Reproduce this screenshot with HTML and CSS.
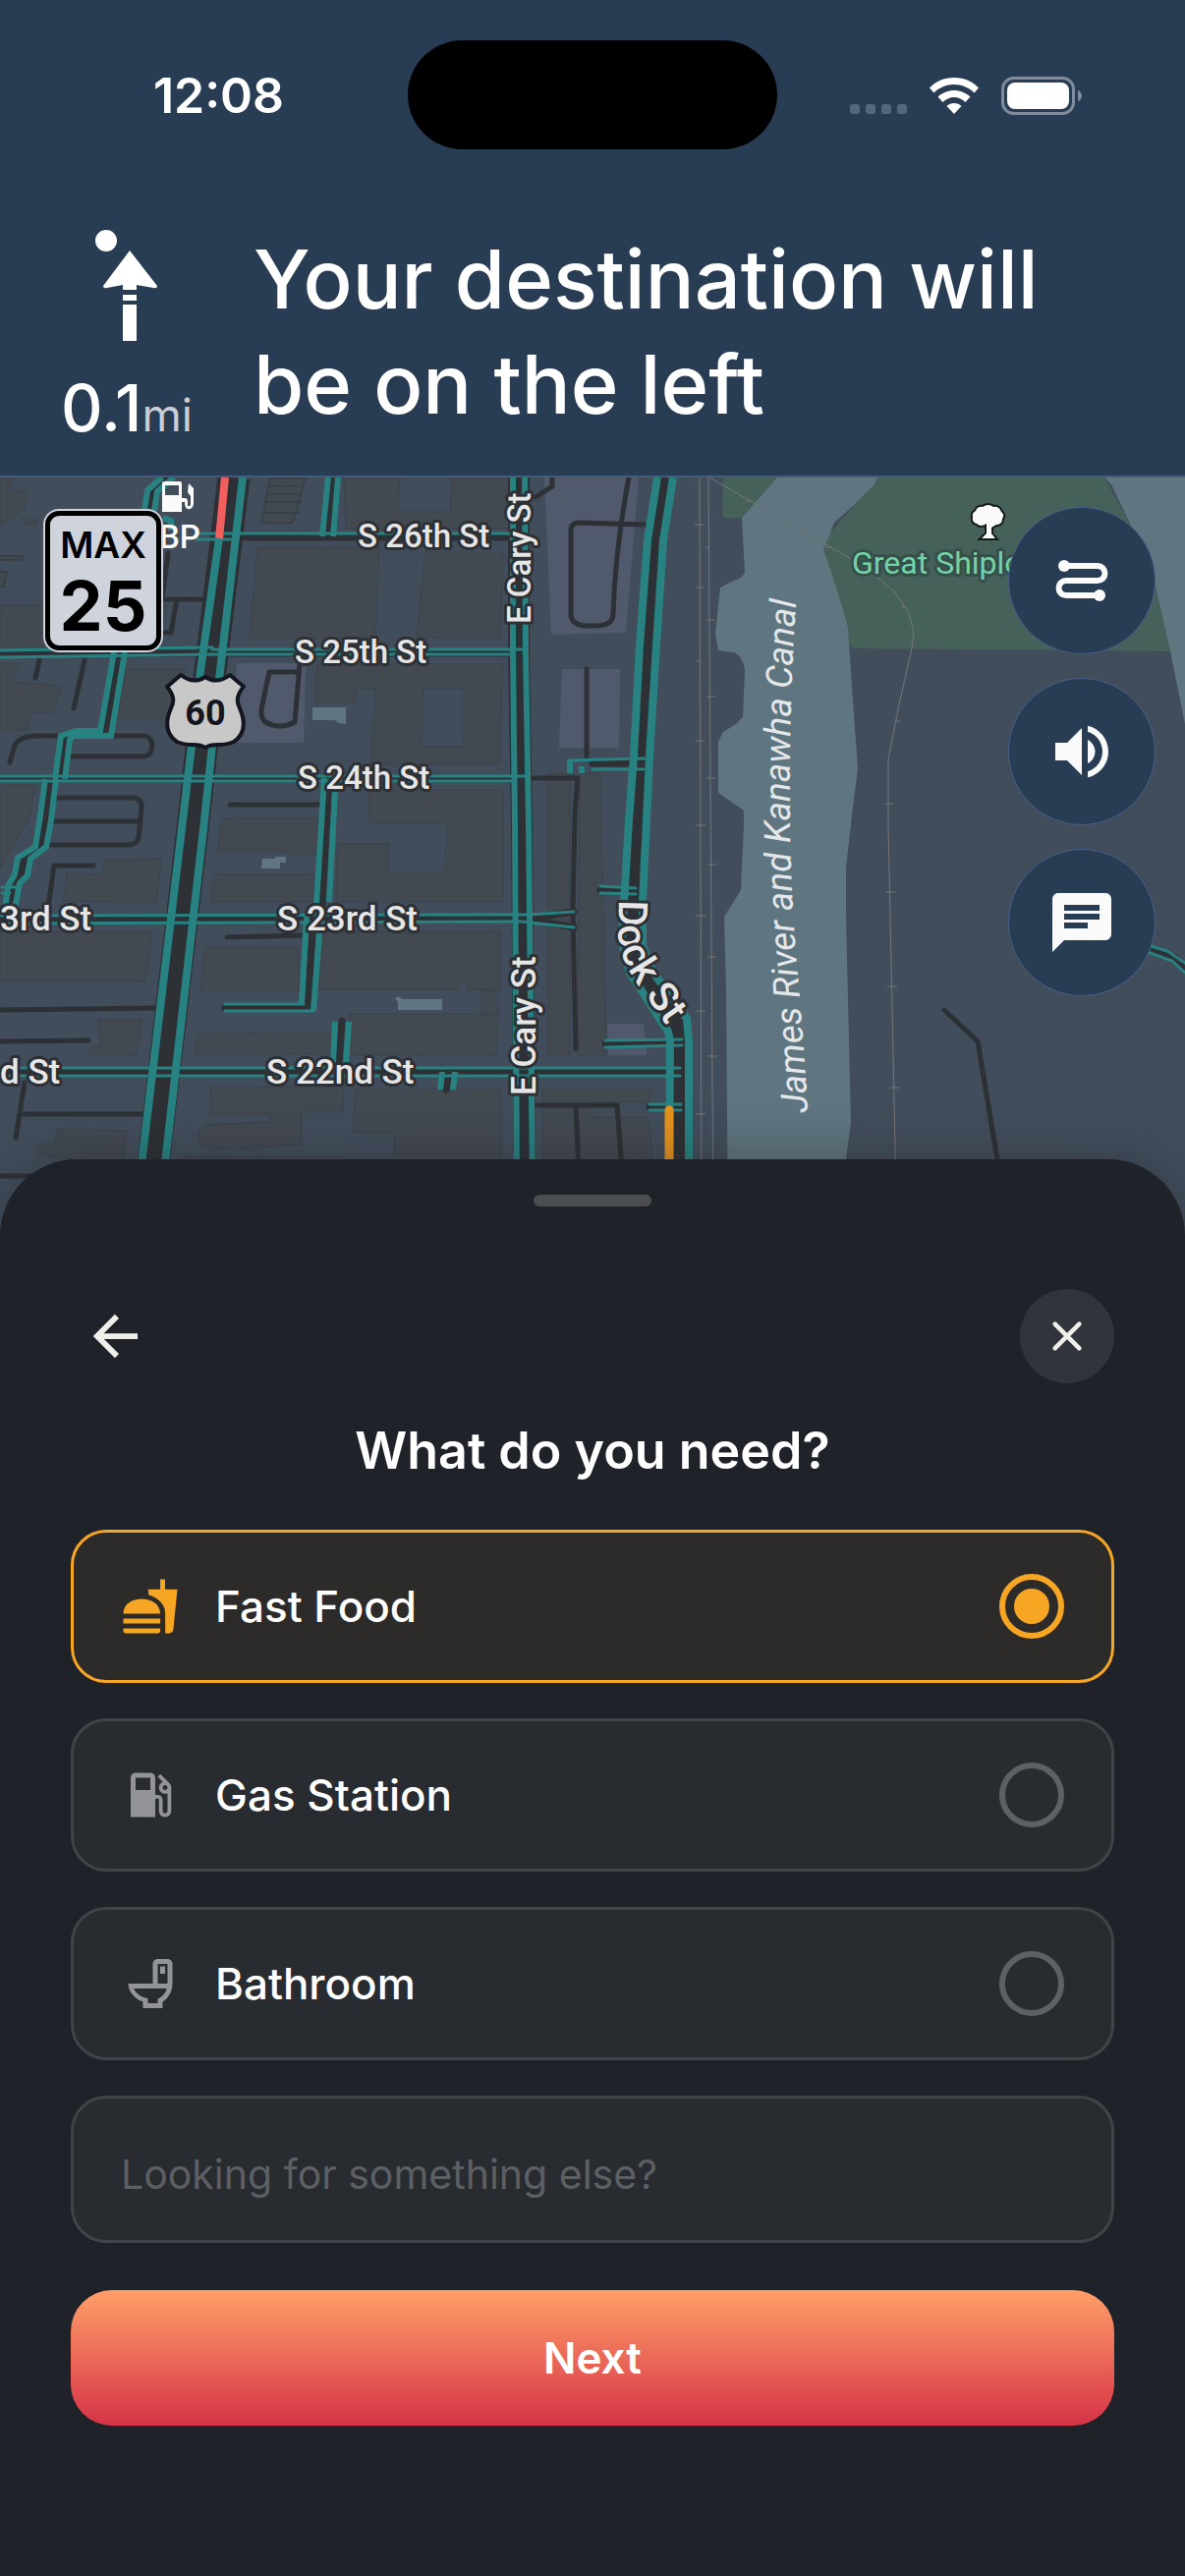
FILE: index.html
```
<!DOCTYPE html>
<html lang="en">

<head>
    <meta charset="UTF-8">
    <meta name="viewport" content="width=device-width, initial-scale=1.0">
    <title>Navigation - What do you need?</title>
    <link rel="stylesheet" href="styles.css">
</head>

<body>
    <header class="top">
        <div class="status-bar">
            <div class="time">12:08</div>
            <div class="island"></div>
            <div class="status-icons">
                <svg class="dots" viewBox="0 0 58 40" aria-hidden="true">
                    <rect x="0" y="29" width="10" height="10" rx="3" />
                    <rect x="16" y="29" width="10" height="10" rx="3" />
                    <rect x="32" y="29" width="10" height="10" rx="3" />
                    <rect x="48" y="29" width="10" height="10" rx="3" />
                </svg>
                <svg class="wifi" viewBox="0 0 52 40" aria-hidden="true">
                    <path d="M26 2C36 2 45 6 51 12.500L46.500 17.500C41 12 34 9 26 9S11 12 5.500 17.500L1 12.500C7 6 16 2 26 2Z" />
                    <path d="M26 15C32 15 38 17.500 42.500 21.500L37.500 27C34.500 24 30.500 22 26 22S17.500 24 14.500 27L9.500 21.500C14 17.500 20 15 26 15Z" />
                    <path d="M26 28C29 28 31.500 29 33.500 31L26 39L18.500 31C20.500 29 23 28 26 28Z" />
                </svg>
                <svg class="battery" viewBox="0 0 82 40" aria-hidden="true">
                    <rect class="battery-case" x="1.500" y="2.500" width="72" height="36" rx="11" />
                    <rect x="6" y="7" width="63" height="27" rx="8" />
                    <path class="battery-nub" d="M78 14.500C80.500 16 82 18 82 20.500S80.500 25 78 26.500Z" />
                </svg>
            </div>
        </div>
        <div class="maneuver">
            <div class="step">
                <svg class="step-icon" viewBox="0 0 96 120" aria-hidden="true">
                    <circle cx="27" cy="14" r="11" />
                    <path d="M51 24L79 60Q79 63 75 62L58 59V64H44V59L28 62Q24 63 24 60Z" />
                    <rect x="44" y="69" width="14" height="6" />
                    <rect x="44" y="79" width="14" height="37" />
                </svg>
                <div class="distance">0.1<span class="unit">mi</span></div>
            </div>
            <h1 class="instruction">Your destination will be on the left</h1>
        </div>
    </header>

    <main class="map">
        <svg class="map-canvas" viewBox="0 486 1206 774" role="img" aria-label="Map of the route">
            <rect class="land" x="0" y="486" width="1206" height="774" />

            <!-- parking lots -->
            <g class="lot">
                <path d="M554 486H650L637 644L561 646Z" />
                <path d="M241 675H311L309 756H236Z" />
                <path d="M572 681H631L630 761H569Z" />
                <path d="M618 1042H655L658 1074H619Z" />
            </g>

            <!-- buildings -->
            <g class="block">
                <path d="M350 486H407L405 521H458L460 486H520V538H352Z" />
                <path d="M262 557H386L382 650H254Z" />
                <path d="M433 562H512L509 649H424Z" />
                <path d="M323 676H512L508 778H378L382 701H362L361 716H320Z" />
                <path class="hole" d="M431 701H472V760H429Z" />
                <path d="M375 804H512V918H342L343 859H396L395 888H453L455 838H375Z" />
                <path d="M226 833H325L321 871L294 870V867H221Z" />
                <path d="M218 890H320L318 918H215Z" />
                <path d="M327 948H509V1007H475V999H467V1007H323Z" />
                <path d="M490 1008H507V1033H490Z" />
                <path d="M356 1032H507L506 1074H353Z" />
                <path d="M208 964H304V1009H204Z" />
                <path d="M201 1052L339 1051L336 1073H199Z" />
                <path d="M362 1108H510V1184H401L402 1153H359Z" />
                <path d="M214 1106H350L349 1132H307V1165L254 1169L206 1168L201 1152L209 1145L276 1142L275 1134H214Z" />
                <path d="M187 1177H349V1190H187Z" />
                <path d="M0 616H170L158 663H0Z" />
                <path d="M0 675H20L11 694L63 698L53 726H32L28 743H0Z" />
                <path d="M128 681H189L172 733H119Z" />
                <path d="M0 799H36L31 830L0 884Z" />
                <path d="M106 875L165 874L159 919L64 917L68 889L104 890Z" />
                <path d="M0 948H155L148 999H0Z" />
                <path d="M100 1038H144L139 1074H90L93 1065H103Z" />
                <path d="M58 1149L129 1151L125 1190L38 1174L42 1164H56Z" />
                <path d="M558 787H580V1074H558Z" />
                <path d="M603 1137H660L665 1190H552V1108H662V1122H603Z" />
                <path d="M590 787H611L617 1074H588Z" />
                <path d="M0 486H12L10 500H28L25 517L3 535H0Z" />
                <path d="M25 527H39L37 534H24Z" />
            </g>
            <g class="stairs">
                <path d="M275 486H311L298 532H266Z" />
                <path d="M275 487H310M273 495H309M271 503H308M270 511H307M268 522H306" />
                <path d="M0 566H24L22 570H0M0 582H7L4 597H0" />
            </g>

            <!-- water and park -->
            <path class="park" d="M736 486L735 523Q736 527 740 527H755L791 486Z" />
            <path class="park" d="M893 486H1124L1150 533L1176 597L1191 663L868 660L850 640L830 560Z" />
            <path class="water" d="M1124 486H1206V737L1191 663L1176 597L1150 533L1131 493Z" />
            <path class="water" d="M791 486L755 527L758 583Q756 588 747 591L733 598L728 645L731 662L747 664Q756 668 758 682L756 730L749 737L736 745L731 755V807L757 825V840L754 906L737 933L739 1007L741 1260H861V1180L866 1143L861 933V883L867 830L873 782L868 713L863 640L861 630L843 573L838 560L849 532L868 515L890 493L893 486Z" />
            <path class="water" d="M318 720H352V737L345 736L341 733H318Z" />
            <path class="water" d="M267 874H280V872H291V878H285V884H266Z" />
            <path class="water" d="M402 1016Q406 1013 410 1017H450V1028H405V1020Z" />

            <!-- alleys -->
            <g class="alley">
                <path d="M562 486V495L545 506" />
                <path d="M640 486Q626 560 624 625Q624 637 605 637H594Q581 635 581 625V540Q581 532 590 532L656 534" />
                <path d="M305 676L300 735Q285 743 270 735Q265 730 266 722L274 684H303" />
                <path d="M171 563L165 610M150 610H210M180 610L174 644H166" />
                <path d="M40 672L36 690M86 672L75 721" />
                <path d="M10 776L15 758Q20 750 35 749H148Q157 752 154 764Q152 770 145 770H73" />
                <path d="M58 812H137Q145 814 144 822L141 853Q139 860 130 860H52M54 836H143" />
                <path d="M234 819H328" />
                <path d="M95 881H55L48 930" />
                <path d="M231 954L310 952M0 1028L160 1026M0 1060L90 1059" />
                <path d="M25 1102L16 1158M22 1134H144" />
                <path d="M597 681V770M540 792H588L585 830L583 928L586 1068" />
                <path d="M545 1125H628L633 1190M586 1125L589 1190" />
                <path d="M961 1028L995 1060L1020 1210" />
                <path d="M0 1197H40" />
            </g>

            <!-- railway -->
            <g class="rail">
                <path d="M712 486L714 1260M721 486L726 1260" />
                <path d="M722 486L868 570L891 586L911 603L924 622L930 643L928 660L915 717L904 773V840L913 1260" />
                <path d="M707 534H716M718 557H722M708 598H716M718 631H727M709 673H714M719 709H728M708 754H717M719 792H728M708 840H718M720 880H729M708 932H718M720 974H729M709 1029H718M720 1075H730M708 1134H718" />
                <path d="M759 510H766M840 557H847M917 618H922M911 734H916M900 818H909M901 908H911M903 1004H913M906 1107H916" />
            </g>

            <!-- roads -->
            <g class="road">
                <path d="M0 665H532M0 793H533M0 935H538L584 928M538 935L584 944M0 1091H693M246 547H522" />
                <path d="M121 664L107 747H76L68 751L61 793M152 520L155 500L172 486" />
                <path d="M51 793L46 832L42 862L25 873L21 890L14 900L9 928" />
                <path d="M339 486L333 546M335 792L328 920M319 933L313 1026H229M348 1039L345 1082M457 1091L454 1109" />
                <path d="M603 777H656M611 906H647M616 1062H694M661 1127H693M1170 967L1195 974L1210 988" />
            </g>
            <path class="road-wide" d="M528 486V663L531 840L534 1210" />
            <path class="road-wide" d="M677 486L667 550L660 657L653 770L649 835L644 920L643 960L653 990L689 1043L692 1060V1210" />
            <path class="highway" d="M238 486L214 683L197 835L153 1210" />

            <!-- live traffic -->
            <g class="traffic traffic-thin">
                <path d="M200 543H522M200 549H235M0 662L210 659H216V661H532M0 669L218 666H520" />
                <path d="M0 790H533M0 795H524M0 932L530 931L538 931L584 928M0 940L530 938L584 944M0 1087H692M0 1095H692" />
                <path d="M229 1022H309M229 1029H319M611 902L647 904M611 909L647 910M616 1059L694 1058M616 1066L694 1064M661 1124H693M661 1130H693M579 774L656 772M603 783H655" />
                <path d="M2 903H16M2 909H10M1168 962L1188 968L1210 983M1168 969L1193 978L1206 990" />
            </g>
            <g class="traffic">
                <path d="M147 520L150 499L165 486M157 520L160 500L177 486M166 527L174 530V540" />
                <path d="M116 664L102 744H77L62 749L56 793M127 664L113 749H75L71 753L66 793" />
                <path d="M46 793L41 830L36 862L18 873L15 890L8 902L5 928M57 793L52 835L47 862L31 874L28 891L20 899L15 925" />
                <path d="M334 486L328 546M344 486L339 546M330 792L322 920M341 805L335 918M312 933L307 1022M325 950L319 1029" />
                <path d="M341 1040L339 1082M355 1040L352 1082M450 1091L448 1109M463 1091L461 1109M580 774V787M592 780V787" />
                <path d="M522 486V663L524 840L526 1210M534 486L535 663L538 840L542 1210" />
            </g>
            <g class="traffic traffic-thick">
                <path d="M669 486L659 550L651 657L645 770L640 835L635 920L633 960L641 990L680 1050L682 1060L681 1210" />
                <path d="M685 486L675 550L668 657L661 770L658 835L654 917V963L665 990L699 1037L701 1060V1210" />
                <path d="M223 548L204 683L186 835L141 1210M247 486L224 683L208 835L165 1210" />
            </g>
            <path class="traffic-heavy" d="M229 486L223 548" />
            <path class="traffic-slow" d="M681 1130V1210" />

            <!-- street labels -->
            <g class="label">
                <text x="364" y="557">S 26th St</text>
                <text x="300" y="675">S 25th St</text>
                <text x="303" y="803">S 24th St</text>
                <text class="label-near" x="282" y="947">S 23rd St</text>
                <text class="label-near" x="271" y="1103">S 22nd St</text>
                <text class="label-near" x="0" y="947">3rd St</text>
                <text class="label-near" x="0" y="1103">d St</text>
                <text transform="translate(540 635) rotate(-90)">E Cary St</text>
                <text class="label-near" transform="translate(545 1115) rotate(-90)">E Cary St</text>
                <path id="dock" class="guide" d="M630 916L629 950Q631 978 652 1006L704 1080" />
                <text class="label-dock"><textPath href="#dock">Dock St</textPath></text>
                <text class="label-poi" x="162" y="558">BP</text>
                <text class="label-park" x="867" y="584">Great Shiplock Park</text>
            </g>
            <path id="canal" class="guide" d="M822 1132Q818 1060 811 980Q804 900 804 820Q803 710 811 600" />
            <text class="label-water"><textPath href="#canal">James River and Kanawha Canal</textPath></text>

            <!-- map pins -->
            <path class="pin" d="M167 490H183Q185 490 185 492V507H188Q191 507 191 510V515Q194 516 194 512V505L191 501L192 492L197 497V513Q196 519 191 518Q188 517 188 511H185V521H165V492Q165 490 167 490ZM168 494V504H182V494Z" />
            <path class="pin pin-tree" d="M999 548L1004 543V533Q998 537 994 533Q989 532 990 526Q989 522 993 520Q995 515 1000 516Q1006 512 1011 516Q1017 515 1019 521Q1023 524 1020 528Q1020 534 1014 534L1009 537V543L1013 548Z" />
            <path class="shield" d="M184 687Q197 697 209 689Q221 697 234 687L248 699Q238 710 244 721Q254 744 238 755Q231 758 222 758Q213 758 209 761Q205 758 196 758Q187 758 180 755Q164 744 174 721Q180 710 170 699Z" />
            <text class="shield-text" x="209" y="738" text-anchor="middle">60</text>
        </svg>

        <div class="speed-limit">
            <span class="speed-caption">MAX</span>
            <span class="speed-value">25</span>
        </div>

        <div class="map-actions">
            <button class="round-btn" type="button" aria-label="Route overview">
                <svg viewBox="0 0 72 72">
                    <path class="route-line" d="M18 21H52A7.500 7.500 0 0 1 52 36H20A7.500 7.500 0 0 0 20 51H54" />
                    <circle cx="18" cy="21" r="6" />
                    <circle cx="54" cy="51" r="6" />
                </svg>
            </button>
            <button class="round-btn" type="button" aria-label="Sound">
                <svg viewBox="0 0 24 24">
                    <path d="M3 9v6h4l5 5V4L7 9H3zm13.500 3c0-1.770-1.020-3.290-2.500-4.030v8.050c1.480-.73 2.500-2.250 2.500-4.020zM14 3.230v2.060c2.890.86 5 3.540 5 6.710s-2.110 5.850-5 6.710v2.060c4.010-.91 7-4.490 7-8.770s-2.990-7.860-7-8.770z" />
                </svg>
            </button>
            <button class="round-btn" type="button" aria-label="Messages">
                <svg viewBox="0 0 24 24">
                    <path d="M20 2H4c-1.100 0-1.990.9-1.990 2L2 22l4-4h14c1.100 0 2-.9 2-2V4c0-1.100-.9-2-2-2zM6 9h12v2H6V9zm8 5H6v-2h8v2zm4-6H6V6h12v2z" />
                </svg>
            </button>
        </div>
    </main>

    <section class="sheet">
        <div class="handle"></div>
        <div class="sheet-nav">
            <button class="back-btn" type="button" aria-label="Back">
                <svg viewBox="0 0 48 48">
                    <path d="M47 24H5M25 3L4 24L25 45" />
                </svg>
            </button>
            <button class="close-btn" type="button" aria-label="Close">
                <svg viewBox="0 0 32 32">
                    <path d="M5 5L27 27M27 5L5 27" />
                </svg>
            </button>
        </div>
        <h2>What do you need?</h2>
        <form class="needs">
            <label class="option">
                <svg class="option-icon" viewBox="0 0 24 24">
                    <path d="M18.060 22.990h1.660c.84 0 1.530-.64 1.630-1.460L23 5.050h-5V1h-1.970v4.050h-4.970l.3 2.340c1.710.47 3.310 1.320 4.270 2.260 1.440 1.420 2.430 2.890 2.430 5.290v8.050zM1 21.990V21h15.030v.99c0 .55-.45 1-1.010 1H2.010c-.56 0-1.010-.45-1.010-1zm15.030-7c0-8-15.030-8-15.030 0h15.030zM1.020 17h15v2h-15z" />
                </svg>
                <span class="option-name">Fast Food</span>
                <input type="radio" name="need" value="food" checked>
            </label>
            <label class="option">
                <svg class="option-icon" viewBox="0 0 24 24">
                    <path d="M19.770 7.230l.01-.01-3.720-3.720L15 4.560l2.110 2.110c-.94.36-1.610 1.260-1.610 2.330 0 1.380 1.120 2.500 2.500 2.500.36 0 .69-.08 1-.21v7.210c0 .55-.45 1-1 1s-1-.45-1-1V14c0-1.100-.9-2-2-2h-1V5c0-1.100-.9-2-2-2H6c-1.100 0-2 .9-2 2v16h10v-7.500h1.500v5c0 1.380 1.120 2.500 2.500 2.500s2.500-1.120 2.500-2.500V9c0-.69-.28-1.320-.73-1.770zM12 10H6V5h6v5zm6 0c-.55 0-1-.45-1-1s.45-1 1-1 1 .45 1 1-.45 1-1 1z" />
                </svg>
                <span class="option-name">Gas Station</span>
                <input type="radio" name="need" value="gas">
            </label>
            <label class="option">
                <svg class="option-icon" viewBox="0 0 24 24">
                    <path fill-rule="evenodd" d="M9 22H17V19.500C19.410 17.870 21 15.120 21 12V4A2 2 0 0 0 19 2H15C13.900 2 13 2.900 13 4V12H3C3 15.090 5.500 18.300 9 19.330V22ZM5.290 14H18.700C18.200 15.800 17 17.200 15 18.300V20H11V18C8.300 17.500 6.200 16.300 5.290 14ZM15 4H19V12H15ZM16 5H18V8H16Z" />
                </svg>
                <span class="option-name">Bathroom</span>
                <input type="radio" name="need" value="bathroom">
            </label>
            <input class="other" type="text" aria-label="Something else" placeholder="Looking for something else?">
            <button class="next" type="submit">Next</button>
        </form>
    </section>
</body>

</html>
```
FILE: styles.css
```
* {
    box-sizing: border-box;
}

body {
    margin: 0;
    min-height: 100vh;
    display: flex;
    flex-direction: column;
    font-family: Inter, "Liberation Sans", sans-serif;
    background-color: #1f2229;
    color: #fff;
}

button {
    border: none;
    padding: 0;
    font-family: inherit;
    color: inherit;
    cursor: pointer;
}

/* header */
.top {
    padding-top: 41px;
    background-color: #283c54;
    border-bottom: 2px solid #435c7c;
}

.status-bar {
    display: grid;
    grid-template-columns: 1fr 376px 1fr;
    align-items: center;
}

.time {
    padding-left: 30px;
    font-size: 50px;
    font-weight: 600;
    text-align: center;
}

.island {
    height: 111px;
    border-radius: 56px;
    background-color: #000;
}

.status-icons {
    display: flex;
    justify-content: center;
    gap: 22px;
    padding-right: 32px;
    fill: #fff;
}

.status-icons svg {
    height: 40px;
}

.status-icons .dots {
    width: 58px;
    fill: #56677d;
}

.wifi {
    width: 52px;
}

.battery {
    width: 82px;
}

.battery-case {
    fill: none;
    stroke: #808c9b;
    stroke-width: 3;
}

.battery-nub {
    fill: #808c9b;
}

.maneuver {
    display: grid;
    grid-template-columns: 186px 1fr;
    gap: 36px;
    padding: 79px 36px 33px;
}

.step {
    display: flex;
    flex-direction: column;
    align-items: center;
    gap: 28px;
}

.step-icon {
    width: 96px;
    height: 120px;
    fill: #fff;
}

.distance {
    height: 72px;
    font-size: 66px;
    font-weight: 500;
    line-height: 72px;
    white-space: nowrap;
}

.unit {
    font-size: 46px;
    font-weight: 400;
    line-height: 1;
    color: #c9ced6;
}

.instruction {
    margin: 0;
    max-width: 860px;
    font-size: 83px;
    font-weight: 500;
    line-height: 107px;
}

/* map */
.map {
    position: relative;
}

.map-canvas {
    display: block;
    width: 100%;
}

.land {
    fill: #424d5b;
}

.lot {
    fill: #515a6c;
}

.block {
    fill: #434951;
    stroke: #3b434d;
}

.block .hole {
    fill: #424d5b;
}

.stairs {
    fill: #434951;
    stroke: #3a4048;
    stroke-width: 2;
}

.park {
    fill: #46605a;
}

.water {
    fill: #5f757f;
}

.alley,
.road,
.road-wide,
.highway {
    fill: none;
    stroke: #2d3034;
    stroke-linecap: round;
    stroke-linejoin: round;
}

.alley {
    stroke-width: 5;
}

.road {
    stroke-width: 7;
}

.road-wide {
    stroke-width: 22;
    stroke-linecap: butt;
}

.highway {
    stroke-width: 33;
    stroke-linecap: butt;
}

.rail {
    fill: none;
    stroke: #757679;
    stroke-width: 1;
}

.traffic,
.traffic-heavy,
.traffic-slow {
    fill: none;
    stroke: #278281;
    stroke-width: 6;
}

.traffic-thin {
    stroke-width: 3;
    stroke-linecap: round;
}

.traffic-thick {
    stroke-width: 8;
}

.traffic-heavy {
    stroke: #f35f5f;
    stroke-width: 8;
}

.traffic-slow {
    stroke: #e5921d;
    stroke-width: 9;
    stroke-linecap: round;
}

.label {
    font-family: Roboto, sans-serif;
    font-size: 33px;
    font-weight: 500;
    fill: #e6e6e6;
    stroke: #2d3034;
    stroke-width: 6;
    stroke-linejoin: round;
    paint-order: stroke;
}

.label-near {
    font-size: 35px;
}

.label-dock {
    font-size: 41px;
}

.label-poi {
    fill: #fafafa;
    stroke: none;
}

.label-park {
    font-size: 32px;
    font-weight: 400;
    fill: #74d3a6;
    stroke: #35504a;
}

.label-water {
    font-family: Roboto, sans-serif;
    font-size: 37px;
    font-style: italic;
    fill: #e3e7e9;
}

.guide {
    fill: none;
    stroke: none;
}

.pin {
    fill: #fafafa;
    fill-rule: evenodd;
}

.pin-tree {
    stroke: #16191c;
    stroke-width: 4;
    paint-order: stroke;
}

.shield {
    fill: #c8c8c8;
    stroke: #13151f;
    stroke-width: 4;
    stroke-linejoin: round;
}

.shield-text {
    font-family: Roboto, sans-serif;
    font-size: 36px;
    font-weight: 700;
    fill: #13151f;
}

.speed-limit {
    position: absolute;
    top: 34px;
    left: 46px;
    width: 118px;
    height: 142px;
    display: flex;
    flex-direction: column;
    align-items: center;
    justify-content: center;
    border: 5px solid #000;
    border-radius: 14px;
    background-color: #cfd3db;
    box-shadow: 0 0 0 2px #cfd3db;
    color: #000;
}

.speed-caption {
    font-size: 37px;
    font-weight: 600;
    line-height: 52px;
}

.speed-value {
    font-size: 70px;
    font-weight: 700;
    line-height: 72px;
}

.map-actions {
    position: absolute;
    top: 30px;
    right: 30px;
    display: flex;
    flex-direction: column;
    gap: 24px;
}

.round-btn {
    width: 150px;
    height: 150px;
    display: flex;
    align-items: center;
    justify-content: center;
    border: 1px solid #46608a;
    border-radius: 50%;
    background-color: #283c54;
}

.round-btn svg {
    width: 72px;
    height: 72px;
    fill: #fafafa;
}

.round-btn .route-line {
    fill: none;
    stroke: #fafafa;
    stroke-width: 6;
}

/* bottom sheet */
.sheet {
    position: relative;
    flex: 1;
    display: flex;
    flex-direction: column;
    margin-top: -80px;
    padding: 36px 72px 72px;
    border-radius: 78px 78px 0 0;
    background-color: #1f2229;
    box-shadow: 0 0 54px rgba(31, 33, 41, 0.4);
}

.handle {
    align-self: center;
    width: 120px;
    height: 12px;
    border-radius: 6px;
    background-color: #4b4d51;
}

.sheet-nav {
    display: flex;
    justify-content: space-between;
    margin-top: 84px;
}

.back-btn,
.close-btn {
    width: 96px;
    height: 96px;
    display: flex;
    align-items: center;
    justify-content: center;
    border-radius: 50%;
    background: none;
}

.back-btn {
    width: 92px;
}

.close-btn {
    background-color: #32343c;
}

.sheet-nav svg {
    width: 46px;
    height: 46px;
    fill: none;
    stroke: #f1efea;
    stroke-width: 6;
}

.sheet-nav .close-btn svg {
    width: 36px;
    height: 36px;
    stroke-width: 4;
    stroke-linecap: round;
}

h2 {
    margin: 38px 0 50px;
    font-size: 52px;
    font-weight: 600;
    line-height: 61px;
    text-align: center;
}

.needs {
    display: flex;
    flex-direction: column;
    gap: 36px;
}

.option {
    height: 156px;
    display: flex;
    align-items: center;
    gap: 36px;
    padding: 0 48px;
    border: 3px solid #404347;
    border-radius: 36px;
    background-color: #282b2f;
    cursor: pointer;
}

.option:has(input:checked) {
    border-color: #f6a623;
    background-color: #2d2b29;
}

.option-icon {
    width: 60px;
    height: 60px;
    fill: #939498;
}

.option:has(input:checked) .option-icon {
    fill: #f6a623;
}

.option-name {
    flex: 1;
    font-size: 44px;
    font-weight: 500;
}

.option input {
    appearance: none;
    width: 66px;
    height: 66px;
    margin: 0;
    border: 6px solid #5d6065;
    border-radius: 50%;
    cursor: pointer;
}

.option input:checked {
    padding: 9px;
    border-color: #f6a623;
    background-color: #f6a623;
    background-clip: content-box;
}

.other {
    width: 100%;
    height: 150px;
    padding: 10px 48px 0;
    border: 3px solid #404347;
    border-radius: 36px;
    background-color: #282b2f;
    color: #fff;
    font-family: inherit;
    font-size: 41px;
}

.other::placeholder {
    color: #5c5f63;
    opacity: 1;
}

.next {
    height: 138px;
    margin-top: 12px;
    border-radius: 42px;
    background-image: linear-gradient(#ff9f68, #d63347);
    font-size: 44px;
    font-weight: 600;
}
```
